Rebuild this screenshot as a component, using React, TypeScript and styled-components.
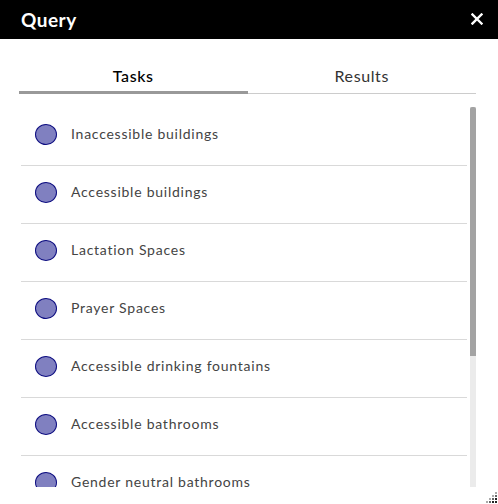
import React from "react";
import styled, { createGlobalStyle } from "styled-components";

const Global = createGlobalStyle`
  html, body { margin: 0; padding: 0; background: #fff; }
  body { font-family: "Lato", "Liberation Sans", sans-serif; overflow: hidden; }
  * { box-sizing: border-box; }
`;

const Panel = styled.div`
  position: relative;
  width: 498px;
  height: 504px;
  display: flex;
  flex-direction: column;
  background: #fff;
`;

const Header = styled.div`
  height: 39px;
  background: #000;
  display: flex;
  align-items: center;
  justify-content: space-between;
  padding: 0 15px 0 21px;
  color: #fff;
`;

const Title = styled.span`
  font-size: 19px;
  font-weight: 700;
  letter-spacing: 0.5px;
`;

const Close = styled.button`
  border: 0;
  background: none;
  padding: 0;
  width: 12px;
  height: 12px;
  display: flex;
  color: #fff;
  margin-top: -2px;
  cursor: pointer;
`;

const Tabs = styled.div`
  display: flex;
  margin: 25px 22px 0 19px;
  align-items: flex-end;
`;

const Tab = styled.div<{ $active?: boolean }>`
  flex: 1;
  text-align: center;
  font-size: 16px;
  line-height: 24px;
  letter-spacing: 0.6px;
  color: ${(p) => (p.$active ? "#000" : "#333")};
  font-weight: ${(p) => (p.$active ? 500 : 400)};
  padding-bottom: ${(p) => (p.$active ? 3 : 5)}px;
  border-bottom: ${(p) => (p.$active ? "3px solid #999" : "1px solid #ccc")};
`;

const ListArea = styled.div`
  display: flex;
  margin: 14px 22px 0 21px;
  height: 379px;
  gap: 3px;
`;

const Viewport = styled.div`
  flex: 1;
  overflow: hidden;
`;

const Row = styled.div`
  height: 58px;
  display: flex;
  align-items: flex-start;
  padding: 16px 0 0 14px;
  border-bottom: 1px solid #d9d9d9;
`;

const Dot = styled.span`
  width: 22px;
  height: 21px;
  border-radius: 50%;
  background: #8080c0;
  border: 1.5px solid #0c0c80;
  flex: none;
`;

const Label = styled.span`
  margin-left: 14px;
  font-size: 14px;
  line-height: 20px;
  color: #444;
  letter-spacing: 0.75px;
`;

const Track = styled.div`
  width: 6px;
  margin-top: -1px;
  background: #ebebeb;
  display: flex;
  flex-direction: column;
`;

const Thumb = styled.div`
  background: #a3a3a3;
  border-radius: 2px 2px 0 0;
`;

const Grip = styled.svg`
  position: absolute;
  right: 0;
  bottom: 0;
`;

const items = [
  "Inaccessible buildings",
  "Accessible buildings",
  "Lactation Spaces",
  "Prayer Spaces",
  "Accessible drinking fountains",
  "Accessible bathrooms",
  "Gender neutral bathrooms",
];

export default function App() {
  const gripDots: [number, number, string][] = [];
  for (let r = 0; r < 4; r++) {
    for (let c = 0; c < 4; c++) {
      if (r + c >= 3) {
        const shade = r + c >= 5 ? "#222" : r + c === 4 ? "#666" : "#aaa";
        gripDots.push([c * 3 + 1, r * 3 + 1, shade]);
      }
    }
  }
  return (
    <Panel>
      <Global />
      <Header>
        <Title>Query</Title>
        <Close aria-label="Close">
          <svg width="12" height="12" viewBox="0 0 12 12">
            <path d="M1.5 1.5L10.5 10.5M10.5 1.5L1.5 10.5" stroke="#fff" strokeWidth="2.4" strokeLinecap="square" />
          </svg>
        </Close>
      </Header>
      <Tabs>
        <Tab $active>Tasks</Tab>
        <Tab>Results</Tab>
      </Tabs>
      <ListArea>
        <Viewport>
          {items.map((t) => (
            <Row key={t}>
              <Dot />
              <Label>{t}</Label>
            </Row>
          ))}
        </Viewport>
        <Track>
          <Thumb style={{ height: `${Math.round(380 * 0.655)}px` }} />
        </Track>
      </ListArea>
      <Grip width="13" height="13" viewBox="0 0 13 13">
        {gripDots.map(([x, y, f], i) => (
          <rect key={i} x={x} y={y} width="2" height="2" fill={f} />
        ))}
      </Grip>
    </Panel>
  );
}
